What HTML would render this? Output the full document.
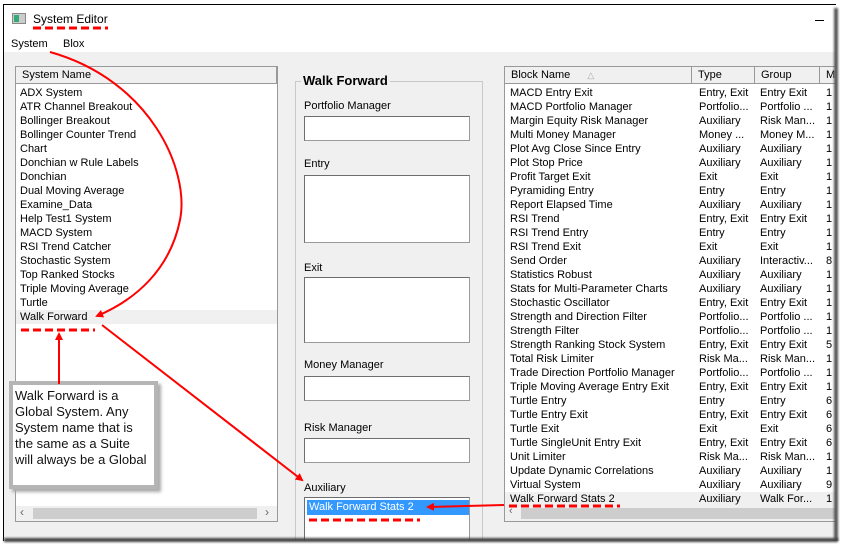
<!DOCTYPE html>
<html><head><style>
*{margin:0;padding:0;box-sizing:border-box}
html,body{width:848px;height:553px;overflow:hidden}
body{background:#fff;position:relative;font-family:"Liberation Sans",Arial,sans-serif;font-size:11px;color:#000}
.a{position:absolute}
.win{left:3px;top:4px;width:836px;height:538px;border:1px solid #000;border-right:none;background:#f0f0f0}
.box{position:absolute;background:#fff;border:1px solid #9a9a9a;border-top-color:#6e6e6e;border-left-color:#6e6e6e}
.lbl{position:absolute;font-size:11px}
.hdr{position:absolute;top:67px;height:17px;line-height:17px;background:#f0f0f0;border-right:1px solid #999;border-bottom:1px solid #999;padding-left:6px;font-size:11px}
.lst{line-height:14px;font-size:11px}
</style></head><body>
<div class="a win"></div>
<div class="a" style="left:4px;top:5px;width:834px;height:47px;background:#fff"></div>
<div class="a" style="left:12px;top:13px;width:14px;height:11px;background:#ccc;border:1px solid #888"></div>
<div class="a" style="left:14px;top:15px;width:5px;height:7px;background:#3a7"></div>
<div class="a" style="left:33px;top:12px;font-size:12px">System Editor</div>
<div class="a" style="left:815px;top:20px;width:9px;height:1px;background:#000"></div>
<div class="a" style="left:11px;top:38px;font-size:11px">System</div>
<div class="a" style="left:63px;top:38px;font-size:11px">Blox</div>

<!-- left list -->
<div class="a" style="left:15px;top:66px;width:263px;height:456px;background:#fff;border:1px solid #999"></div>
<div class="hdr" style="left:16px;width:261px">System Name</div>
<div class="a" style="left:16px;top:310px;width:261px;height:14px;background:#f0f0f0"></div>
<div class="a lst" style="left:20px;top:86px">ADX System<br>ATR Channel Breakout<br>Bollinger Breakout<br>Bollinger Counter Trend<br>Chart<br>Donchian w Rule Labels<br>Donchian<br>Dual Moving Average<br>Examine_Data<br>Help Test1 System<br>MACD System<br>RSI Trend Catcher<br>Stochastic System<br>Top Ranked Stocks<br>Triple Moving Average<br>Turtle<br>Walk Forward</div>
<div class="a" style="left:16px;top:506px;width:261px;height:15px;background:#f0f0f0"></div>
<div class="a" style="left:33px;top:508px;width:224px;height:11px;background:#cdcdcd"></div>
<div class="a" style="left:20px;top:505px;color:#666;font-size:12px">‹</div>
<div class="a" style="left:265px;top:505px;color:#666;font-size:12px">›</div>

<!-- group -->
<div class="a" style="left:295px;top:81px;width:188px;height:470px;border:1px solid #c8c8c8;border-bottom:none"></div>
<div class="a" style="left:301px;top:73px;background:#f0f0f0;padding:0 2px;font-weight:bold;font-size:13px;color:#000">Walk Forward</div>
<div class="lbl" style="left:304px;top:100px">Portfolio Manager</div>
<div class="box" style="left:304px;top:116px;width:166px;height:25px"></div>
<div class="lbl" style="left:304px;top:158px">Entry</div>
<div class="box" style="left:304px;top:175px;width:166px;height:68px"></div>
<div class="lbl" style="left:304px;top:262px">Exit</div>
<div class="box" style="left:304px;top:277px;width:166px;height:66px"></div>
<div class="lbl" style="left:304px;top:359px">Money Manager</div>
<div class="box" style="left:304px;top:376px;width:166px;height:25px"></div>
<div class="lbl" style="left:304px;top:422px">Risk Manager</div>
<div class="box" style="left:304px;top:438px;width:166px;height:25px"></div>
<div class="lbl" style="left:304px;top:482px">Auxiliary</div>
<div class="box" style="left:304px;top:497px;width:166px;height:54px;border-bottom:none"></div>
<div class="a" style="left:307px;top:500px;width:162px;height:15px;background:#3399ff;color:#fff;line-height:15px;padding-left:2px;font-size:11px">Walk Forward Stats 2</div>

<!-- right list -->
<div class="a" style="left:504px;top:66px;width:340px;height:456px;background:#fff;border:1px solid #999"></div>
<div class="hdr" style="left:505px;width:187px">Block Name <span style="color:#aaa;font-size:9px;margin-left:14px">△</span></div>
<div class="hdr" style="left:692px;width:63px">Type</div>
<div class="hdr" style="left:755px;width:65px">Group</div>
<div class="hdr" style="left:820px;width:30px">M</div>
<div class="a" style="left:505px;top:492px;width:335px;height:14px;background:#f0f0f0"></div>
<div class="a lst" style="left:510px;top:86px">MACD Entry Exit<br>MACD Portfolio Manager<br>Margin Equity Risk Manager<br>Multi Money Manager<br>Plot Avg Close Since Entry<br>Plot Stop Price<br>Profit Target Exit<br>Pyramiding Entry<br>Report Elapsed Time<br>RSI Trend<br>RSI Trend Entry<br>RSI Trend Exit<br>Send Order<br>Statistics Robust<br>Stats for Multi-Parameter Charts<br>Stochastic Oscillator<br>Strength and Direction Filter<br>Strength Filter<br>Strength Ranking Stock System<br>Total Risk Limiter<br>Trade Direction Portfolio Manager<br>Triple Moving Average Entry Exit<br>Turtle Entry<br>Turtle Entry Exit<br>Turtle Exit<br>Turtle SingleUnit Entry Exit<br>Unit Limiter<br>Update Dynamic Correlations<br>Virtual System<br>Walk Forward Stats 2</div>
<div class="a lst" style="left:699px;top:86px">Entry, Exit<br>Portfolio...<br>Auxiliary<br>Money ...<br>Auxiliary<br>Auxiliary<br>Exit<br>Entry<br>Auxiliary<br>Entry, Exit<br>Entry<br>Exit<br>Auxiliary<br>Auxiliary<br>Auxiliary<br>Entry, Exit<br>Portfolio...<br>Portfolio...<br>Entry, Exit<br>Risk Ma...<br>Portfolio...<br>Entry, Exit<br>Entry<br>Entry, Exit<br>Exit<br>Entry, Exit<br>Risk Ma...<br>Auxiliary<br>Auxiliary<br>Auxiliary</div>
<div class="a lst" style="left:760px;top:86px">Entry Exit<br>Portfolio ...<br>Risk Man...<br>Money M...<br>Auxiliary<br>Auxiliary<br>Exit<br>Entry<br>Auxiliary<br>Entry Exit<br>Entry<br>Exit<br>Interactiv...<br>Auxiliary<br>Auxiliary<br>Entry Exit<br>Portfolio ...<br>Portfolio ...<br>Entry Exit<br>Risk Man...<br>Portfolio ...<br>Entry Exit<br>Entry<br>Entry Exit<br>Exit<br>Entry Exit<br>Risk Man...<br>Auxiliary<br>Auxiliary<br>Walk For...</div>
<div class="a lst" style="left:826px;top:86px">1<br>1<br>1<br>1<br>1<br>1<br>1<br>1<br>1<br>1<br>1<br>1<br>8<br>1<br>1<br>1<br>1<br>1<br>5<br>1<br>1<br>1<br>6<br>6<br>6<br>6<br>1<br>1<br>9<br>1</div>
<div class="a" style="left:505px;top:506px;width:335px;height:15px;background:#f0f0f0"></div>
<div class="a" style="left:521px;top:508px;width:320px;height:11px;background:#cdcdcd"></div>
<div class="a" style="left:509px;top:505px;color:#666">‹</div>

<!-- callout -->
<div class="a" style="left:9px;top:381px;width:149px;height:108px;background:#fff;border:4px solid #b5b5b5;box-shadow:3px 3px 3px #aaa;padding:3px 6px 3px 2px;font-size:13px;line-height:16px;color:#111">Walk Forward is a Global System. Any System name that is the same as a Suite will always be a Global</div>

<svg class="a" style="left:0;top:0" width="848" height="553">
<defs><marker id="ar" markerWidth="8" markerHeight="8" refX="6" refY="4" orient="auto" markerUnits="userSpaceOnUse"><path d="M0,0 L8,4 L0,8 z" fill="#f00"/></marker></defs>
<g stroke="#f00" fill="none" stroke-width="2">
<path d="M50,52 C150,80 190,170 180,220 C170,270 135,300 97,316" marker-end="url(#ar)"/>
<path d="M59,384 L59,334" marker-end="url(#ar)"/>
<path d="M102,325 L302,480" marker-end="url(#ar)"/>
<path d="M504,505 L428,507" marker-end="url(#ar)"/>
<g stroke-dasharray="8,4" stroke-width="3">
<path d="M33,28 L108,28"/><path d="M21,330 L95,330"/><path d="M309,520 L420,520"/><path d="M509,506 L620,506"/>
</g></g></svg>

<!-- torn edges -->
<div class="a" style="left:836px;top:0;width:12px;height:553px;background:#fff"></div>
<div class="a" style="left:834px;top:8px;width:4px;height:536px;background:#555;filter:blur(1px)"></div>
<div class="a" style="left:0;top:541px;width:848px;height:12px;background:#fff"></div>
<div class="a" style="left:4px;top:538px;width:834px;height:4px;background:#444;filter:blur(1px)"></div>
</body></html>
